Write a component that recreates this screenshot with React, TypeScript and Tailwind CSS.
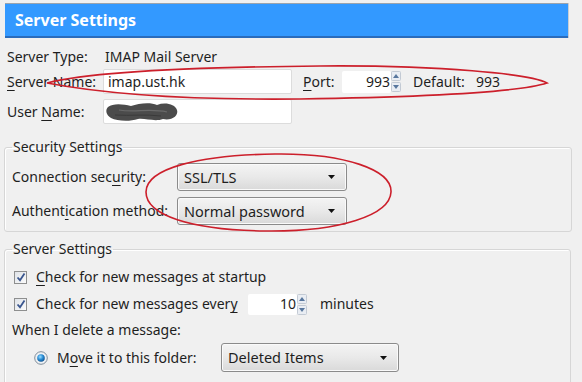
import React from "react";

const K = ({ children }: { children: React.ReactNode }) => (
  <span className="underline decoration-1 underline-offset-[3px]">{children}</span>
);

const Spinner = () => (
  <div className="flex h-[21px] w-[10px] flex-col gap-[1px]">
    <svg width="10" height="10" viewBox="0 0 10 10">
      <rect x="0.5" y="0.5" width="9" height="9" rx="1" fill="#e9edf3" stroke="#c3cad4" />
      <path d="M2 7 L5 3 L8 7 Z" fill="#58779e" />
    </svg>
    <svg width="10" height="10" viewBox="0 0 10 10">
      <rect x="0.5" y="0.5" width="9" height="9" rx="1" fill="#e9edf3" stroke="#c3cad4" />
      <path d="M2 3 L5 7 L8 3 Z" fill="#58779e" />
    </svg>
  </div>
);

const Select = ({ value, className }: { value: string; className: string }) => (
  <div
    className={`flex items-center justify-between rounded-[3px] border border-[#8b8b8b] bg-gradient-to-b from-[#f4f4f4] via-[#e9e9e9] to-[#d9d9d9] pl-[6px] pr-[11px] text-[14.5px] shadow-[inset_0_0_0_1px_#fafafa] ${className}`}
  >
    <span>{value}</span>
    <svg width="7" height="4" viewBox="0 0 7 4">
      <path d="M0 0 H7 L3.5 4 Z" fill="#111" />
    </svg>
  </div>
);

const Checkbox = () => (
  <div className="flex h-[13px] w-[13px] items-center justify-center border border-[#8e8f8f] bg-gradient-to-br from-[#dfe3e8] to-[#fbfbfb]">
    <svg width="10" height="10" viewBox="0 0 10 10">
      <path d="M1.5 5.5 L4 8.2 L8.5 1.5" fill="none" stroke="#3a568f" strokeWidth="1.8" />
    </svg>
  </div>
);

const Radio = () => (
  <svg width="14" height="14" viewBox="0 0 14 14">
    <defs>
      <radialGradient id="dot" cx="0.4" cy="0.35" r="0.7">
        <stop offset="0" stopColor="#9fe0ff" />
        <stop offset="0.5" stopColor="#2a8ed6" />
        <stop offset="1" stopColor="#0d4d8a" />
      </radialGradient>
    </defs>
    <circle cx="7" cy="7" r="6.3" fill="#eef1f4" stroke="#7f8c99" strokeWidth="1" />
    <circle cx="7" cy="7" r="3.8" fill="url(#dot)" />
  </svg>
);

export default function App() {
  return (
    <div className="relative h-[382px] w-[582px] overflow-hidden bg-[#f0f0f0] font-['Noto_Sans',sans-serif] text-[14px] leading-none text-[#1e1e1e]">
      <div className="ml-[5px] mt-[3px] flex h-[35px] w-[563px] items-center border-t border-b-2 border-t-[#9aa3ad] border-b-[#2a6cbc] bg-[#3399ff] pl-[10px] text-[16px] font-bold text-white shadow-[1px_0_0_#c9ced3]">
        Server Settings
      </div>

      <div className="pl-[7px]">
        <div className="mt-[9px] flex h-[20px] items-center">
          <span className="w-[98px]">Server Type:</span>
          <span>IMAP Mail Server</span>
        </div>

        <div className="mt-[2px] flex h-[25px] items-center">
          <span className="w-[96px]">
            <K>S</K>erver Name:
          </span>
          <div className="flex h-[25px] w-[189px] items-center rounded-[2px] border border-[#dcdcdc] bg-white pl-[4px]">
            imap.ust.hk
          </div>
          <span className="ml-[11px] w-[39px]">
            <K>P</K>ort:
          </span>
          <div className="flex h-[22px] w-[49px] items-center justify-end rounded-[2px] bg-white pr-[1px]">993</div>
          <Spinner />
          <span className="ml-[12px] w-[63px]">Default:</span>
          <span>993</span>
        </div>

        <div className="mt-[5px] flex h-[25px] items-center">
          <span className="w-[96px]">
            User <K>N</K>ame:
          </span>
          <div className="flex h-[25px] w-[189px] items-center rounded-[2px] border border-[#dcdcdc] bg-white pl-[1px]">
            <svg width="74" height="20" viewBox="0 0 74 20">
              <path
                d="M3 5 C8 1, 18 2, 26 4 C34 1, 46 0, 52 3 C60 0, 70 2, 72 8 C74 14, 66 19, 58 17 C50 20, 40 16, 33 17 C24 20, 12 19, 6 16 C1 13, 0 8, 3 5 Z"
                fill="#4b4b4b"
              />
              <path d="M14 8 C30 11, 44 6, 62 10" stroke="#6a6a6a" strokeWidth="1.2" fill="none" />
              <path d="M10 13 C26 14, 40 12, 56 14" stroke="#3a3a3a" strokeWidth="1" fill="none" />
            </svg>
          </div>
        </div>
      </div>

      <fieldset className="mx-[4px] mt-[13px] w-[568px] rounded-[3px] border border-[#d6d6d6] px-[7px] pb-[6px] shadow-[inset_1px_1px_0_#fff]">
        <legend className="h-[20px] px-[1px] leading-[20px]">Security Settings</legend>
        <div className="mt-[6px] flex h-[28px] items-center">
          <span className="w-[165px]">
            Connection sec<K>u</K>rity:
          </span>
          <Select value="SSL/TLS" className="h-[28px] w-[170px]" />
        </div>
        <div className="mt-[6px] flex h-[28px] items-center">
          <span className="w-[165px]">
            Authent<K>i</K>cation method:
          </span>
          <Select value="Normal password" className="h-[28px] w-[170px]" />
        </div>
      </fieldset>

      <fieldset className="mx-[4px] mt-[7px] h-[160px] w-[567px] rounded-[3px] border border-[#d6d6d6] px-[7px] shadow-[inset_1px_1px_0_#fff]">
        <legend className="h-[20px] px-[1px] leading-[20px]">Server Settings</legend>
        <div className="ml-[2px] mt-[8px] flex h-[20px] items-center gap-[9px]">
          <Checkbox />
          <span>
            <K>C</K>heck for new messages at startup
          </span>
        </div>
        <div className="ml-[2px] mt-[6px] flex h-[22px] items-center">
          <Checkbox />
          <span className="ml-[9px] w-[212px]">
            Check for new messages ever<K>y</K>
          </span>
          <div className="flex h-[21px] w-[49px] items-center justify-end rounded-[2px] bg-white pr-[1px]">10</div>
          <Spinner />
          <span className="ml-[13px]">minutes</span>
        </div>
        <div className="mt-[5px] flex h-[20px] items-center">When I delete a message:</div>
        <div className="mt-[3px] flex h-[29px] items-center">
          <span className="ml-[22px]">
            <Radio />
          </span>
          <span className="ml-[9px] w-[164px]">
            M<K>o</K>ve it to this folder:
          </span>
          <Select value="Deleted Items" className="h-[29px] w-[178px]" />
        </div>
      </fieldset>

      <svg className="pointer-events-none absolute left-0 top-0" width="582" height="382" viewBox="0 0 582 382">
        <path
          d="M47 83 C90 72, 200 67, 320 66 C440 65, 530 74, 547 83 C520 92, 420 97, 300 99 C200 100, 110 95, 47 83 Z"
          fill="none"
          stroke="#cc1f2b"
          strokeWidth="1.6"
        />
        <path
          d="M146 192 C146 168, 200 155, 275 154 C345 153, 392 170, 391 192 C390 215, 340 232, 265 231 C190 230, 146 215, 146 192 Z"
          fill="none"
          stroke="#cc1f2b"
          strokeWidth="1.6"
        />
      </svg>
    </div>
  );
}
